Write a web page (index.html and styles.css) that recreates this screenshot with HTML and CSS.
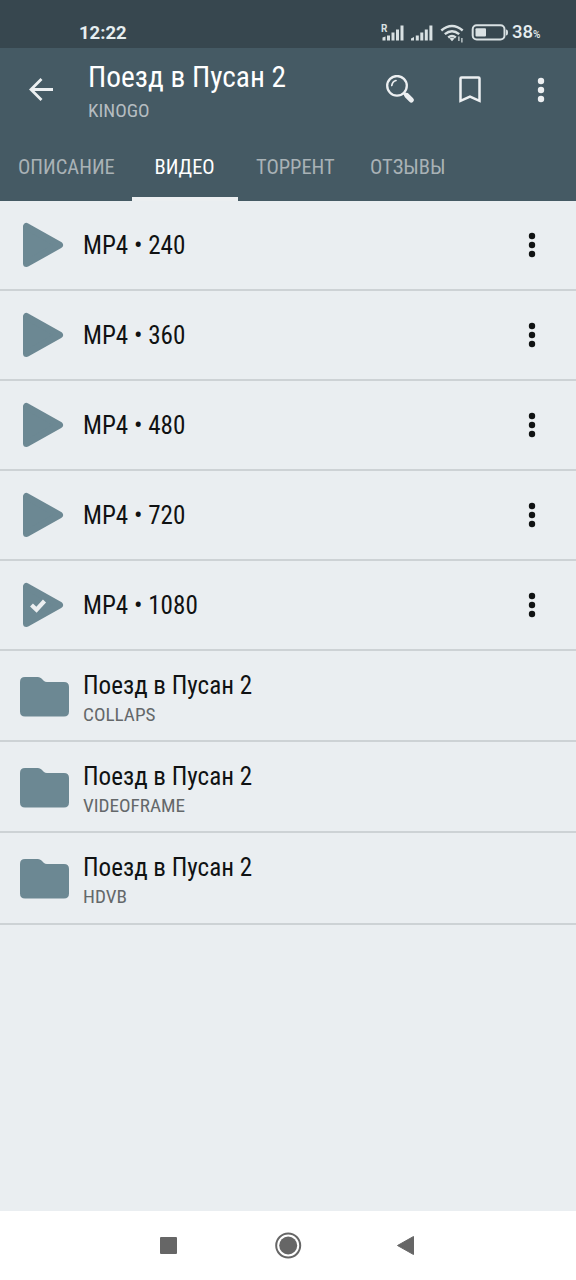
FILE: index.html
```html
<!DOCTYPE html>
<html lang="ru">
<head>
<meta charset="utf-8">
<title>Поезд в Пусан 2</title>
<link rel="stylesheet" href="styles.css">
</head>
<body>
<svg class="defs" width="0" height="0">
  <symbol id="play" viewBox="0 0 42 46"><path d="M4.500 4.500v37L37.500 23z" fill="#6c8893" stroke="#6c8893" stroke-width="7" stroke-linejoin="round"/></symbol>
  <symbol id="folder" viewBox="0 0 50 40"><path d="M5 0H18Q20 0 21.500 1.500L24 4Q25 5 27 5H44Q49 5 49 10V34.500Q49 39.500 44 39.500H5Q0 39.500 0 34.500V5Q0 0 5 0Z" fill="#6c8893"/></symbol>
  <symbol id="dots" viewBox="0 0 8 26"><g fill="currentColor"><circle cx="4" cy="4" r="3.200"/><circle cx="4" cy="13" r="3.200"/><circle cx="4" cy="22" r="3.200"/></g></symbol>
</svg>
<div class="screen">
  <div class="status">
    <span class="clock">12:22</span>
    <svg class="signals" width="130" height="20" viewBox="0 0 130 20" fill="#d9e1e3">
      <path d="M1.500 17.500v-3l3-1v4zM6 12.500h3v5h-3zM10.500 9.500h3v8h-3zM15 6.500h3v11h-3zM19.500 2.500h3v15h-3z"/>
      <path d="M30 17.500v-2l3-1.500v3.500zM34.800 12.500h3v5h-3zM39.300 9.500h3v8h-3zM43.800 6.500h3v11h-3zM48.400 2.500h3v15h-3z"/>
      <text class="roaming" x="0" y="8.500">R</text>
      <g fill="none" stroke="#d9e1e3" stroke-width="2.400"><path d="M60.300 7.500q10.700-9 21.400 0M63.800 11.200q7.200-6 14.400 0M67.200 14.500q3.800-3 7.600 0"/></g>
      <path d="M68.500 15.500q2.500-1.600 5 0L71 18.200z"/>
      <path d="M77.300 13.500h1.200v4.500h-1.200zM80.300 15h1.200v4.500h-1.200z"/>
      <rect x="91.700" y="2.200" width="31.800" height="14.300" rx="4" fill="none" stroke="#d9e1e3" stroke-width="2"/>
      <rect x="94.500" y="5.200" width="10.500" height="8.300" rx="1"/><path d="M125 6.500q2 0 2 3t-2 3z"/>
    </svg>
    <span class="charge">38<small>%</small></span>
  </div>
  <header class="bar">
    <div class="top">
      <svg class="back" width="26" height="24" viewBox="0 0 26 24" fill="none" stroke="#eceff1" stroke-width="2.800"><path d="M25 11.500H3.500M13.500 1L3 11.500L13.500 22"/></svg>
      <div class="heading"><h1>Поезд в Пусан 2</h1><p>KINOGO</p></div>
      <svg class="search" width="29" height="29" viewBox="0 0 29 29" fill="none" stroke="#eceff1"><circle cx="11" cy="10.800" r="9.800" stroke-width="2.300"/><path d="M5.800 10.500Q6.300 6.500 10 5.500" stroke-width="1.700" stroke-linecap="round"/><path d="M18 18l3 3" stroke-width="3"/><path d="M20.800 20.500l4.500 4.500" stroke-width="5.200" stroke-linecap="round"/></svg>
      <svg class="mark" width="22" height="28" viewBox="0 0 22 28"><path d="M1.500 2.500q0-1 1-1h17q1 0 1 1V24.800L11 20.700L1.500 24.800z" fill="none" stroke="#eceff1" stroke-width="2.500"/></svg>
      <svg class="menu" width="8" height="26"><use href="#dots"/></svg>
    </div>
    <nav class="tabs"><span class="t1">ОПИСАНИЕ</span><span class="active">ВИДЕО</span><span class="t3">ТОРРЕНТ</span><span class="t4">ОТЗЫВЫ</span></nav>
  </header>
  <main>
    <div class="row"><svg class="play" width="42" height="46"><use href="#play"/></svg><b>MP4 • 240</b><svg class="more" width="8" height="26"><use href="#dots"/></svg></div>
    <div class="row"><svg class="play" width="42" height="46"><use href="#play"/></svg><b>MP4 • 360</b><svg class="more" width="8" height="26"><use href="#dots"/></svg></div>
    <div class="row"><svg class="play" width="42" height="46"><use href="#play"/></svg><b>MP4 • 480</b><svg class="more" width="8" height="26"><use href="#dots"/></svg></div>
    <div class="row"><svg class="play" width="42" height="46"><use href="#play"/></svg><b>MP4 • 720</b><svg class="more" width="8" height="26"><use href="#dots"/></svg></div>
    <div class="row"><svg class="play" width="42" height="46"><use href="#play"/><path d="M9.500 23l5 4.700L22.500 19" fill="none" stroke="#eceff1" stroke-width="4.200"/></svg><b>MP4 • 1080</b><svg class="more" width="8" height="26"><use href="#dots"/></svg></div>
    <div class="row dir"><svg class="folder" width="50" height="40"><use href="#folder"/></svg><div class="info"><b>Поезд в Пусан 2</b><p>COLLAPS</p></div></div>
    <div class="row dir"><svg class="folder" width="50" height="40"><use href="#folder"/></svg><div class="info"><b>Поезд в Пусан 2</b><p>VIDEOFRAME</p></div></div>
    <div class="row dir"><svg class="folder" width="50" height="40"><use href="#folder"/></svg><div class="info"><b>Поезд в Пусан 2</b><p>HDVB</p></div></div>
  </main>
  <footer class="nav">
    <svg width="576" height="69" viewBox="0 0 576 69" fill="#666"><rect x="160" y="26" width="17" height="17" rx="1"/><circle cx="288.200" cy="34.500" r="9"/><circle cx="288.200" cy="34.500" r="12" fill="none" stroke="#666" stroke-width="2"/><path d="M397.500 34.500L413.500 25.500V43.500z" stroke="#666" stroke-linejoin="round"/></svg>
  </footer>
</div>
</body>
</html>
```
FILE: styles.css
```css
* { box-sizing: border-box; margin: 0; }
body { font-family: "Roboto Condensed", Roboto, sans-serif; font-stretch: 75%; background: #eaeef1; }
.defs { position: absolute; }
svg { display: block; flex: none; }
.screen { width: 576px; height: 1280px; display: flex; flex-direction: column; overflow: hidden; }
.status { height: 48px; flex: none; background: #37474f; display: flex; align-items: center; padding: 17px 0 0 79px; color: #e6eef0; font-family: Roboto, sans-serif; font-stretch: 100%; }
.clock { width: 302px; font-size: 18.5px; font-weight: 700; line-height: 32px; }
.roaming { font: 700 10px Roboto, sans-serif; }
.charge { font-size: 18.5px; font-weight: 500; line-height: 32px; padding-top: 1px; }
.charge small { font-size: 10px; }
.signals { margin-right: 1px; }
.bar { height: 152.500px; flex: none; background: #455a64; color: #fff; display: flex; flex-direction: column; }
.top { height: 83px; display: flex; align-items: center; padding-left: 28px; }
.heading { width: 298px; margin-left: 34px; align-self: flex-start; padding-top: 12px; }
h1 { font-size: 29.4px; font-weight: 400; line-height: 34px; white-space: nowrap; }
.heading p { font-size: 19.2px; line-height: 24px; margin-top: 5px; color: #b5bdc1; }
.search { margin-bottom: 1px; }
.mark { margin-left: 44px; }
.menu { margin-left: 56px; color: #eceff1; }
.tabs { height: 69.500px; display: flex; font-size: 20.5px; line-height: 73px; color: #a9b2b6; white-space: nowrap; }
.tabs span { height: 69.500px; }
.t1 { width: 132px; padding-left: 18px; }
.active { width: 106px; padding-left: 22.5px; color: #fff; border-bottom: 4px solid #eceff1; }
.t3 { width: 132px; padding-left: 18px; }
main { flex: 1; }
.row { height: 90.1px; display: flex; align-items: center; border-bottom: 2px solid #cdd2d5; color: #101213; }
.row b { font-size: 25.1px; line-height: 30px; font-weight: 400; white-space: nowrap; padding-top: 3px; }
.play { margin: 1px 19px 0 22px; }
.more { margin-left: auto; margin-right: 40px; }
.dir { height: 91.2px; }
.folder { margin: 2px 13px 0 20px; }
.info b { display: block; }
.info p { font-size: 19.2px; line-height: 24px; margin-top: 2px; color: #64686a; }
.info { padding-top: 3px; }
.nav { height: 69px; flex: none; background: #fff; }
```
